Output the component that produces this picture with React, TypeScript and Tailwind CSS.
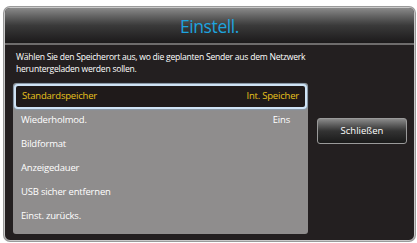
import React from "react";

export default function App() {
  const rows = ["Wiederholmod.", "Bildformat", "Anzeigedauer", "USB sicher entfernen", "Einst. zurücks."];
  return (
    <div className="w-[417px] h-[243px] bg-white pt-[7px] pl-[4px]" style={{ fontFamily: '"Open Sans", "Liberation Sans", sans-serif' }}>
      <div className="w-[411px] h-[234px] rounded-[6px] border border-[#c9c9c9] bg-[#231f20] overflow-hidden flex flex-col shadow-[0_0_0_1px_#9a9a9a]">
        <div className="h-[35px] shrink-0 bg-gradient-to-b from-[#8a8a8a] via-[#3a3a3a] to-[#1c1a1b] flex items-center justify-center pt-[2px]">
          <span className="text-[17.5px] leading-none text-[#1ea3df] tracking-[-0.4px]">Einstell.</span>
        </div>
        <div className="h-[2px] bg-[#6e6c6c] shrink-0" />
        <div className="px-[11px] pt-[6px] text-[8.6px] leading-[12px] text-white tracking-[-0.25px]">
          <div>Wählen Sie den Speicherort aus, wo die geplanten Sender aus dem Netzwerk</div>
          <div>heruntergeladen werden sollen.</div>
        </div>
        <div className="flex flex-1 pl-[8px] pt-[8px] pb-[6px] pr-[7px]">
          <div className="w-[295px] bg-[#8f8d8d] rounded-[3px] flex flex-col pt-[1px]">
            <div className="mx-[1px] h-[25px] rounded-[4px] border-2 border-[#cfe3f5] bg-[#1f1a1a] flex items-center justify-between px-[6px] shadow-[0_0_2px_#7fb6e6]">
              <span className="text-[9.5px] tracking-[-0.2px] text-[#e8c21c]">Standardspeicher</span>
              <span className="text-[9.5px] tracking-[-0.2px] text-[#e8c21c]">Int. Speicher</span>
            </div>
            <div className="h-[23px] flex items-center justify-between pl-[8px] pr-[18px] text-[9.5px] tracking-[-0.2px] text-white">
              <span>{rows[0]}</span>
              <span>Eins</span>
            </div>
            {rows.slice(1).map((r) => (
              <div key={r} className="h-[24px] flex items-center pl-[8px] text-[9.5px] tracking-[-0.2px] text-white">
                {r}
              </div>
            ))}
          </div>
          <div className="flex-1 flex justify-end pt-[35px]">
            <div className="w-[90px] h-[26px] rounded-[3px] border border-[#9a9a9a] bg-gradient-to-b from-[#8a8a8a] via-[#333] to-[#1a1a1a] flex items-center justify-center text-[9.5px] text-white">
              Schließen
            </div>
          </div>
        </div>
      </div>
    </div>
  );
}
